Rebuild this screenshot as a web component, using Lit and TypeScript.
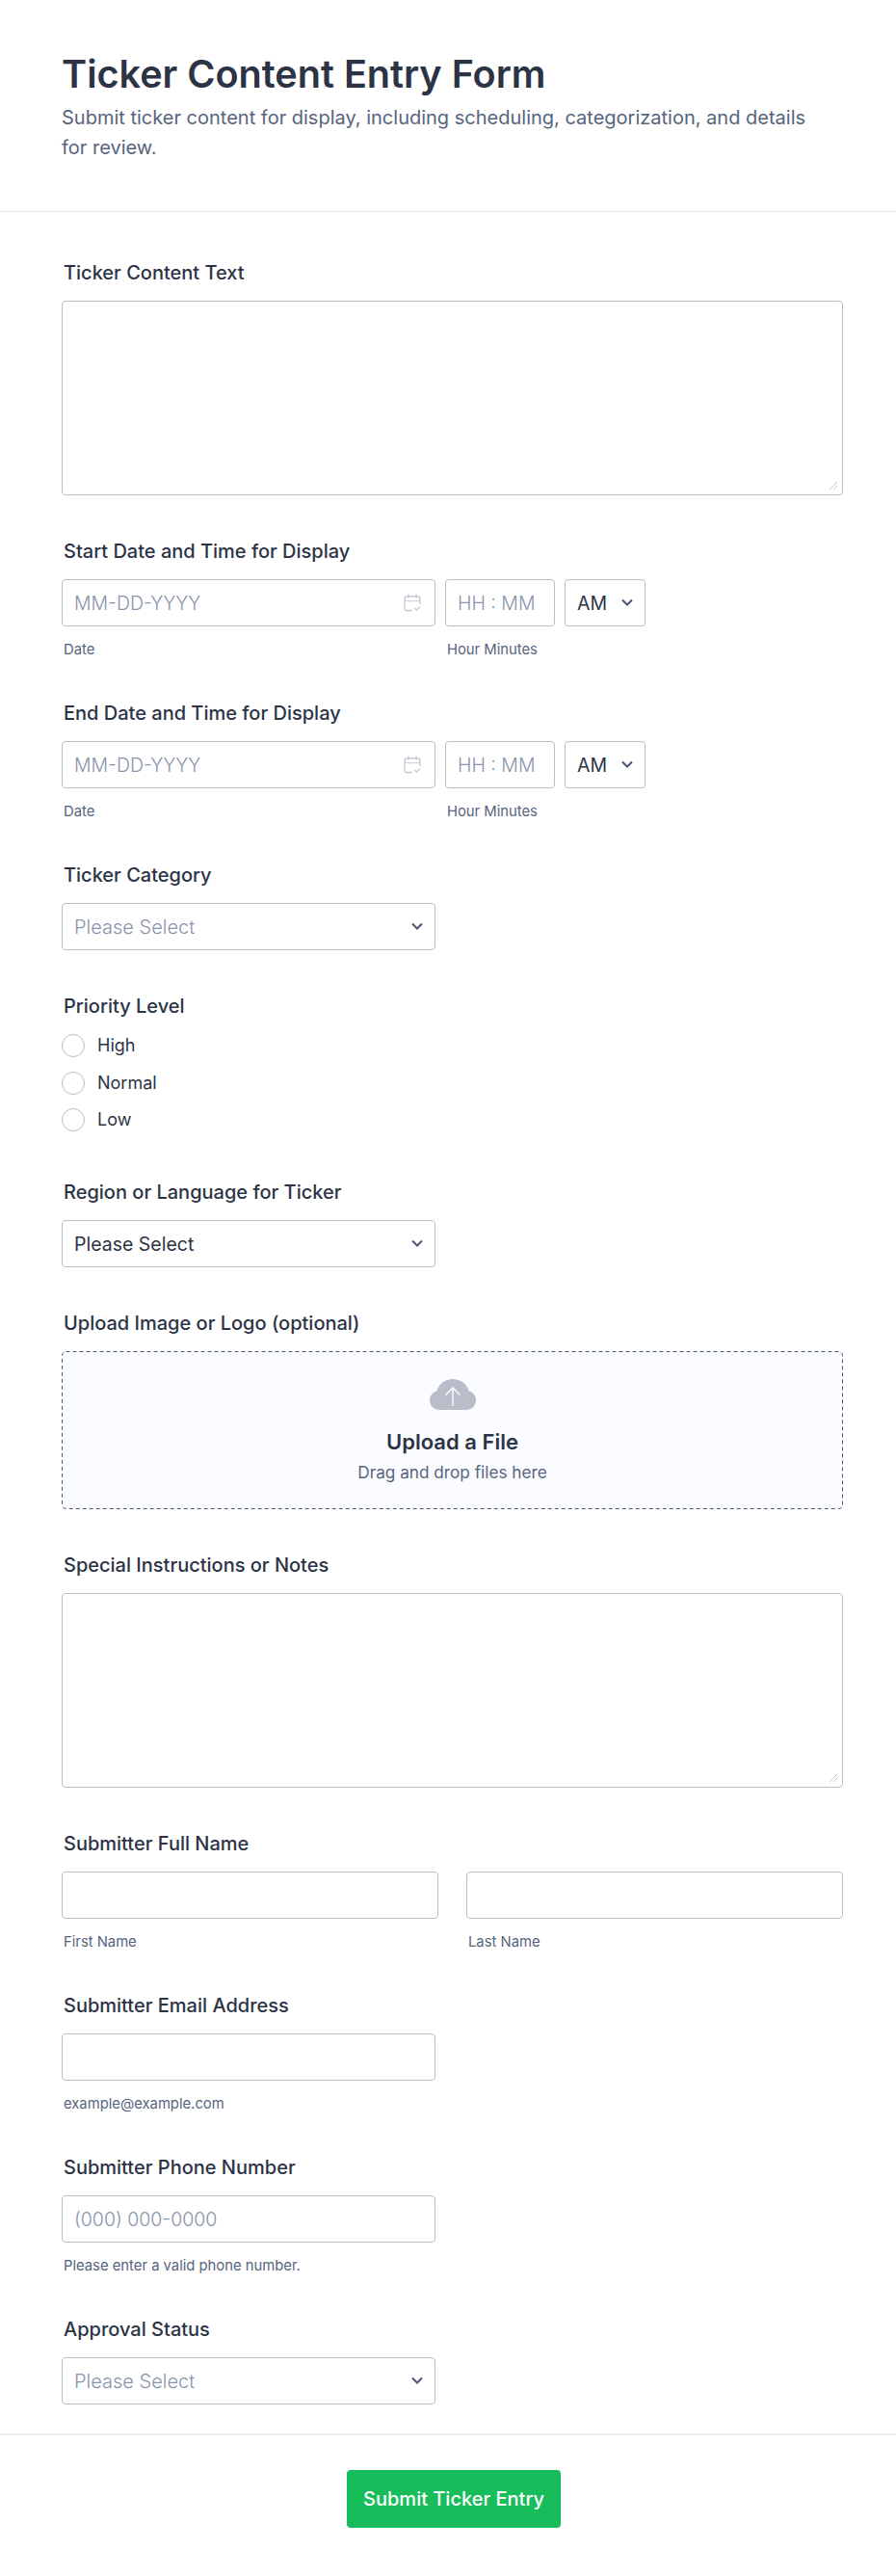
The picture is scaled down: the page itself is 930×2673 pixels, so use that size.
import { LitElement, html, css } from 'lit';
import { customElement } from 'lit/decorators.js';

const chevron = html`
  <svg class="chevron" width="14" height="9" viewBox="0 0 14 9" fill="none">
    <path d="M2 1.5 7 6.5 12 1.5" stroke="#4b5675" stroke-width="2" />
  </svg>
`;

const calendar = html`
  <svg class="calendar" width="18" height="19" viewBox="0 0 18 19" fill="none" stroke="#c3c8d3" stroke-width="1.3">
    <path d="M9 17.500H3a2 2 0 0 1-2-2V5a2 2 0 0 1 2-2h12a2 2 0 0 1 2 2v6" />
    <path d="M1 7.500h16M5 .5v4M13 .5v4" stroke-dasharray="2 .8" />
    <path d="M11.500 15l2 2 3.500-3.500" />
  </svg>
`;

const grip = html`
  <svg class="grip" width="10" height="10" viewBox="0 0 10 10" fill="none" stroke="#c3c8d3" stroke-width="1">
    <path d="M1 9 9 1M5 9 9 5" />
  </svg>
`;

@customElement('app-root')
export class AppRoot extends LitElement {
  static override styles = css`
    :host {
      display: block;
      background: #fff;
      color: #2c3345;
      font-family: Inter, 'Noto Sans', sans-serif;
      height: 2673px;
      overflow: hidden;
    }

    * {
      box-sizing: border-box;
      font-family: inherit;
    }

    header {
      padding: 50px 64px 50px;
      border-bottom: 1px solid #dfe2e8;
    }

    h1 {
      margin: 0 0 3px;
      font-size: 39.600px;
      line-height: 54px;
      font-weight: 600;
      color: #2c3345;
    }

    .subtitle {
      margin: 0;
      max-width: 790px;
      font-size: 20px;
      line-height: 31px;
      color: #57647e;
    }

    .fields {
      display: flex;
      flex-direction: column;
      gap: 48px;
      padding: 53px 55px 30px 64px;
    }

    .label {
      display: block;
      margin: 0 0 19px 2px;
      font-size: 20px;
      line-height: 20px;
      font-weight: 450;
      color: #2c3345;
    }

    input[type='text'],
    select,
    textarea {
      display: block;
      width: 100%;
      height: 49px;
      padding: 0 12px;
      background: #fff;
      border: 1px solid #b8bdc9;
      border-radius: 4px;
      font-size: 19.500px;
      color: #2c3345;
      outline: none;
      appearance: none;
    }

    input.short {
      width: 388px;
    }

    ::placeholder {
      color: #8894ab;
      font-weight: 300;
      opacity: 1;
    }

    textarea {
      height: 202px;
      padding: 12px;
      resize: none;
    }

    .short {
      width: 388px;
    }

    .select-wrap {
      position: relative;
    }

    .select-wrap select.placeholder {
      color: #8894ab;
      font-size: 20px;
      font-weight: 300;
    }

    .chevron {
      position: absolute;
      right: 12px;
      top: 20px;
      pointer-events: none;
    }

    .calendar {
      position: absolute;
      right: 15px;
      top: 15px;
      pointer-events: none;
    }

    .grip {
      position: absolute;
      right: 5px;
      bottom: 5px;
      pointer-events: none;
    }

    .date-row {
      display: flex;
      gap: 10px;
    }

    .date-col {
      width: 388px;
    }

    .time-col {
      width: 114px;
    }

    .ampm {
      width: 84px;
    }

    .sub {
      display: block;
      margin: 16px 0 0 2px;
      font-size: 14.800px;
      line-height: 16px;
      color: #57647e;
    }

    .radios {
      display: flex;
      flex-direction: column;
      gap: 14.500px;
      padding-bottom: 5px;
      margin-top: 3px;
    }

    .radio {
      display: flex;
      align-items: center;
      gap: 13px;
      font-size: 18px;
      line-height: 24px;
      color: #2c3345;
    }

    .radio input {
      width: 24px;
      height: 24px;
      margin: 0;
      background: #fff;
      border: 1px solid #b8bdc9;
      border-radius: 50%;
      appearance: none;
    }

    .upload {
      position: relative;
      display: flex;
      flex-direction: column;
      align-items: center;
      height: 164px;
      padding-top: 29px;
      background: #fbfcff;
      border-radius: 4px;
    }

    .dash {
      position: absolute;
      inset: 0;
      width: 100%;
      height: 100%;
      pointer-events: none;
    }

    .dash rect {
      width: calc(100% - 1px);
      height: calc(100% - 1px);
      fill: none;
      stroke: #4b5675;
      stroke-dasharray: 4 3;
    }

    .upload-title {
      margin-top: 19px;
      font-size: 22px;
      line-height: 28px;
      font-weight: 600;
      color: #2c3345;
    }

    .upload-sub {
      margin-top: 8px;
      font-size: 17.200px;
      line-height: 20px;
      color: #57647e;
    }

    .name-row {
      display: grid;
      grid-template-columns: 391px 391px;
      column-gap: 29px;
    }

    footer {
      display: flex;
      justify-content: center;
      border-top: 2px solid #eceef3;
      padding: 36px 0 0 12px;
    }

    button {
      width: 222px;
      height: 60px;
      padding: 0;
      border: none;
      border-radius: 4px;
      background: #18bd5b;
      color: #fff;
      font-size: 20px;
      font-weight: 500;
    }
  `;

  private renderSelect(text: string, placeholder: boolean) {
    return html`
      <div class="select-wrap short">
        <select class=${placeholder ? 'placeholder' : ''}>
          <option>${text}</option>
        </select>
        ${chevron}
      </div>
    `;
  }

  private renderDateField(label: string) {
    return html`
      <div>
        <label class="label">${label}</label>
        <div class="date-row">
          <div class="date-col">
            <div class="select-wrap">
              <input type="text" placeholder="MM-DD-YYYY" />
              ${calendar}
            </div>
            <span class="sub">Date</span>
          </div>
          <div class="time-col">
            <input type="text" placeholder="HH : MM" />
            <span class="sub">Hour Minutes</span>
          </div>
          <div class="select-wrap ampm">
            <select>
              <option>AM</option>
            </select>
            ${chevron}
          </div>
        </div>
      </div>
    `;
  }

  private renderTextarea(label: string) {
    return html`
      <div>
        <label class="label">${label}</label>
        <div class="select-wrap">
          <textarea></textarea>
          ${grip}
        </div>
      </div>
    `;
  }

  override render() {
    return html`
      <header>
        <h1>Ticker Content Entry Form</h1>
        <p class="subtitle">
          Submit ticker content for display, including scheduling, categorization, and details for review.
        </p>
      </header>
      <div class="fields">
        ${this.renderTextarea('Ticker Content Text')}
        ${this.renderDateField('Start Date and Time for Display')}
        ${this.renderDateField('End Date and Time for Display')}
        <div>
          <label class="label">Ticker Category</label>
          ${this.renderSelect('Please Select', true)}
        </div>
        <div>
          <label class="label">Priority Level</label>
          <div class="radios">
            ${['High', 'Normal', 'Low'].map(
              (r) => html`<label class="radio"><input type="radio" name="priority" />${r}</label>`
            )}
          </div>
        </div>
        <div>
          <label class="label">Region or Language for Ticker</label>
          ${this.renderSelect('Please Select', false)}
        </div>
        <div>
          <label class="label">Upload Image or Logo (optional)</label>
          <div class="upload">
            <svg class="dash"><rect x="0.5" y="0.5" rx="4" /></svg>
            <svg width="48" height="32" viewBox="0 0 48 32">
              <path
                d="M10 32a10 10 0 0 1-2.500-19.700A16.500 16.500 0 0 1 24 0a16.500 16.500 0 0 1 16.500 12.300A10 10 0 0 1 38 32Z"
                fill="#b8bdc9"
              />
              <path d="M24 28V9M16.500 16.500 24 9l7.500 7.500" fill="none" stroke="#f3f4f7" stroke-width="1.600" />
            </svg>
            <div class="upload-title">Upload a File</div>
            <div class="upload-sub">Drag and drop files here</div>
          </div>
        </div>
        ${this.renderTextarea('Special Instructions or Notes')}
        <div>
          <label class="label">Submitter Full Name</label>
          <div class="name-row">
            <div>
              <input type="text" />
              <span class="sub">First Name</span>
            </div>
            <div>
              <input type="text" />
              <span class="sub">Last Name</span>
            </div>
          </div>
        </div>
        <div>
          <label class="label">Submitter Email Address</label>
          <input class="short" type="text" />
          <span class="sub">example@example.com</span>
        </div>
        <div>
          <label class="label">Submitter Phone Number</label>
          <input class="short" type="text" placeholder="(000) 000-0000" />
          <span class="sub">Please enter a valid phone number.</span>
        </div>
        <div>
          <label class="label">Approval Status</label>
          ${this.renderSelect('Please Select', true)}
        </div>
      </div>
      <footer>
        <button type="button">Submit Ticker Entry</button>
      </footer>
    `;
  }
}
